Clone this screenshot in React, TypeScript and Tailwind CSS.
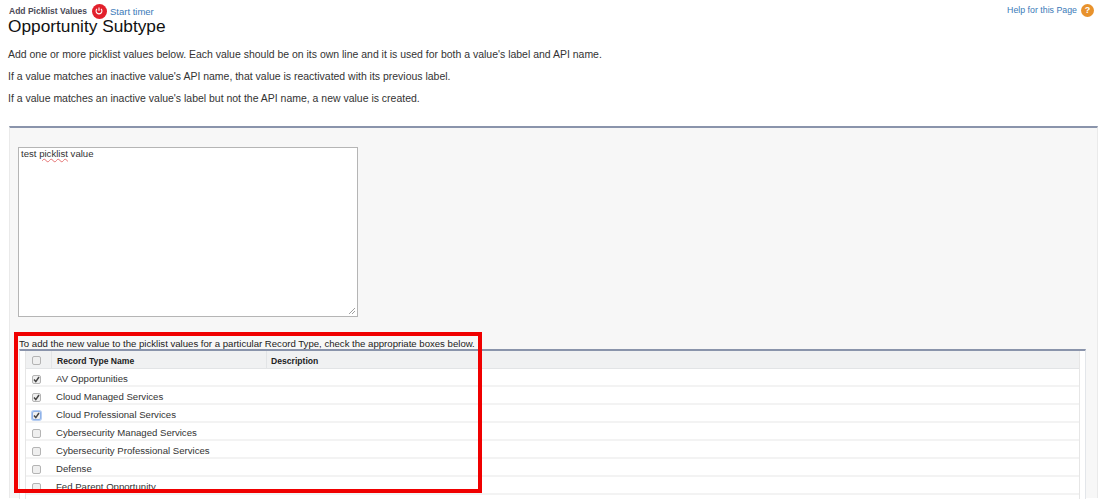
const rows = [
  { name: "AV Opportunities", checked: true },
  { name: "Cloud Managed Services", checked: true },
  { name: "Cloud Professional Services", checked: true, focus: true },
  { name: "Cybersecurity Managed Services", checked: false },
  { name: "Cybersecurity Professional Services", checked: false },
  { name: "Defense", checked: false },
  { name: "Fed Parent Opportunity", checked: false },
  { name: "", checked: false, blank: true },
];

function Box({ checked, focus }: { checked?: boolean; focus?: boolean }) {
  return (
    <span
      className={
        "flex h-[9px] w-[9px] items-center justify-center rounded-[2px] border bg-[#efefef] " +
        (focus ? "border-[#8fb2e8] shadow-[0_0_0_1px_#b5cdf2]" : "border-[#b4b4b4]")
      }
    >
      {checked && (
        <svg viewBox="0 0 9 9" className="h-[9px] w-[9px] shrink-0">
          <path d="M2 4.6 L3.8 6.6 L7 2" fill="none" stroke="#444" strokeWidth="1.5" />
        </svg>
      )}
    </span>
  );
}

export default function App() {
  return (
    <div className="relative h-[499px] w-[1101px] overflow-hidden bg-white font-['Liberation_Sans',Arial,sans-serif] text-[#222]">
      {/* page header */}
      <div className="flex items-start justify-between pl-[9px] pr-[7px] pt-[4px]">
        <div className="flex h-[14px] items-center">
          <span className="pt-[1px] text-[8.5px] font-bold leading-none text-[#4a4a56]">Add Picklist Values</span>
          <span className="ml-[5px] flex h-[15px] w-[15px] items-center justify-center rounded-full bg-[#e2202c]">
            <svg viewBox="0 0 12 12" className="h-[10px] w-[10px]">
              <path d="M3.6 3.4a3.5 3.5 0 1 0 4.8 0" fill="none" stroke="#fff" strokeWidth="1.3" />
              <path d="M6 1.8v4" fill="none" stroke="#fff" strokeWidth="1.3" />
            </svg>
          </span>
          <span className="ml-[3px] pt-[1px] text-[9.5px] leading-none text-[#3a7ab8]">Start timer</span>
        </div>
        <div className="flex items-center">
          <span className="pl-[1px] text-[8.8px] leading-none text-[#3a7ab8]">Help for this Page</span>
          <span className="ml-[4px] flex h-[13px] w-[13px] items-center justify-center rounded-full bg-[#e8922c] text-[9px] font-bold leading-none text-white">
            ?
          </span>
        </div>
      </div>

      <h1 className="ml-[8px] mt-[-2px] text-[17.3px] font-normal leading-[20px] text-[#111]">Opportunity Subtype</h1>

      <div className="ml-[8px] mt-[13px] flex flex-col gap-[10px] text-[10.47px] leading-[12px] text-[#333]">
        <p>Add one or more picklist values below. Each value should be on its own line and it is used for both a value's label and API name.</p>
        <p>If a value matches an inactive value's API name, that value is reactivated with its previous label.</p>
        <p>If a value matches an inactive value's label but not the API name, a new value is created.</p>
      </div>

      {/* main panel */}
      <div className="ml-[9px] mt-[21px] h-[372px] w-[1089px] border-x border-[#eaeaea] border-t-2 border-t-[#8a94ab] bg-[#f7f7f7] pl-[8px] pr-[11px] pt-[19px]">
        <div className="relative h-[170px] w-[340px] border border-[#b5b5b5] bg-white px-[2px] text-[9.6px] leading-[12px] text-[#333]">
          test <span className="underline decoration-[#e57373] decoration-wavy decoration-1">picklist</span> value
          <svg viewBox="0 0 8 8" className="absolute bottom-[1px] right-[1px] h-[8px] w-[8px]">
            <path d="M1 7 L7 1 M4 7 L7 4" stroke="#888" strokeWidth="0.8" />
          </svg>
        </div>

        <p className="ml-[1px] mt-[21px] text-[9.6px] leading-[11px] text-[#222]">
          To add the new value to the picklist values for a particular Record Type, check the appropriate boxes below.
        </p>

        {/* record type table */}
        <div className="ml-[1px] h-[200px] w-[1067px] border-x border-[#e3e6ea] border-t-2 border-t-[#8a94ab] bg-white pl-[5px] pr-[5px]">
          <div className="border-x border-[#e6e6e6]">
            <div className="flex h-[18px] items-center border-b border-[#e2e4e6] bg-[#f0f1f2] text-[8.6px] font-bold text-[#222]">
              <div className="flex h-full w-[26px] items-center border-r border-[#e2e4e6] pl-[6px] pt-[2px]">
                <Box />
              </div>
              <div className="flex h-full w-[215px] items-center border-r border-[#e2e4e6] pl-[5px] pt-[4px]">Record Type Name</div>
              <div className="pl-[4px] pt-[4px]">Description</div>
            </div>
            {rows.map((row, i) => (
              <div key={i} className="flex h-[18px] items-center border-b-2 border-[#f3f3f3] pt-[5px] text-[9.6px] text-[#333]">
                <div className="flex w-[26px] pl-[6px]">{!row.blank && <Box checked={row.checked} focus={row.focus} />}</div>
                <div className="pl-[4px]">{row.name}</div>
              </div>
            ))}
          </div>
        </div>
      </div>

      {/* red highlight drawn on top of the screenshot */}
      <div className="absolute left-[14px] top-[332px] h-[161px] w-[468px] border-[4px] border-[#f00000]" />
    </div>
  );
}
